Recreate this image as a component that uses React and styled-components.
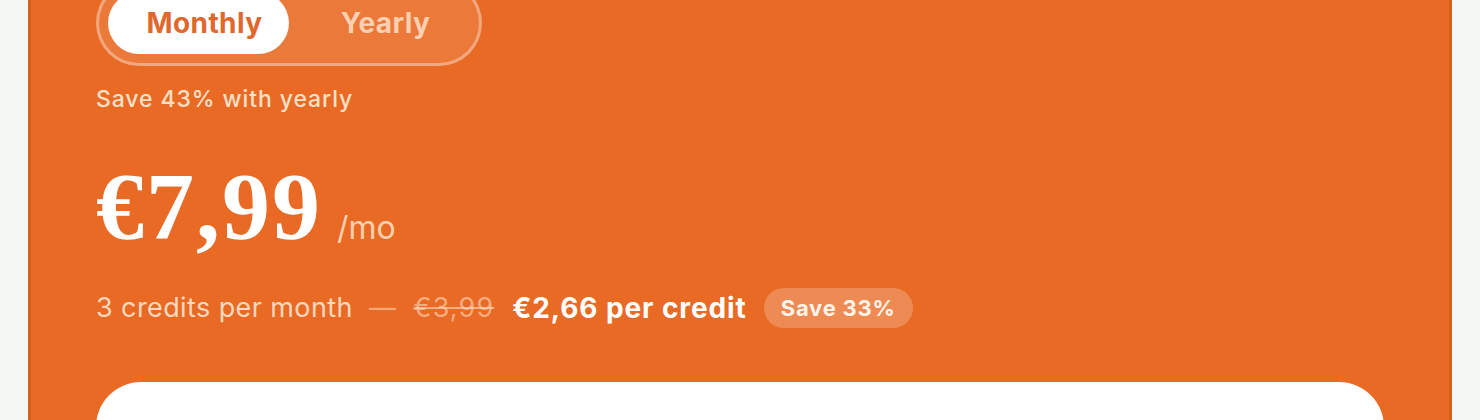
import React, { useState } from "react";
import styled, { createGlobalStyle } from "styled-components";

const GlobalStyle = createGlobalStyle`
  * { box-sizing: border-box; }
  body {
    margin: 0;
    background: #f4f8f5;
    font-family: Inter, "Noto Sans", sans-serif;
    overflow: hidden;
  }
`;

const Page = styled.div`
  width: 1480px;
  height: 420px;
  padding: 0 28px;
  overflow: hidden;
`;

// the card is scrolled: its top edge sits above the viewport
const Card = styled.section`
  margin-top: -63px;
  background: #e96a24;
  border: 3px solid #d65f1e;
  border-radius: 40px;
  padding: 40px 65px 60px;
  height: 560px;
`;

const Toggle = styled.div`
  display: inline-flex;
  align-items: center;
  padding: 9px;
  border: 3px solid rgba(255, 255, 255, 0.35);
  border-radius: 999px;
  background: rgba(255, 255, 255, 0.1);
`;

const ToggleOption = styled.button`
  border: none;
  cursor: pointer;
  width: 181px;
  height: 62px;
  padding: 0 0 0 12px;
  border-radius: 999px;
  font-family: Inter, sans-serif;
  font-size: 28px;
  font-weight: 700;
  letter-spacing: 0.4px;
  background: ${(p) => (p.$active ? "#ffffff" : "transparent")};
  color: ${(p) => (p.$active ? "#e0682c" : "rgba(255, 232, 212, 0.78)")};
`;

const SaveHint = styled.p`
  margin: 20px 0 0;
  font-size: 23px;
  font-weight: 500;
  letter-spacing: 0.9px;
  color: #fbe0c8;
  line-height: 26px;
`;

const PriceRow = styled.div`
  display: flex;
  align-items: baseline;
  margin-top: 50px;
  gap: 15px;
`;

const Price = styled.span`
  font-family: "Liberation Serif", "Times New Roman", serif;
  font-weight: 700;
  font-size: 96px;
  line-height: 90px;
  color: #ffffff;
  letter-spacing: 2px;
`;

const Period = styled.span`
  font-size: 32px;
  color: rgba(255, 228, 205, 0.85);
`;

const CreditsRow = styled.div`
  display: flex;
  align-items: center;
  margin-top: 36px;
  font-size: 27px;
  letter-spacing: 0.7px;
  line-height: 40px;
`;

const Muted = styled.span`
  color: rgba(255, 232, 215, 0.88);
  font-weight: 400;
  letter-spacing: 0.4px;
`;

const Dash = styled.span`
  color: rgba(255, 220, 195, 0.55);
  margin: 0 17px 0 16px;
`;

const OldPrice = styled.span`
  color: rgba(255, 220, 195, 0.6);
  text-decoration: line-through;
  letter-spacing: 1.1px;
  margin-right: 18px;
`;

const PerCredit = styled.span`
  color: #ffffff;
  font-size: 28px;
  font-weight: 700;
  letter-spacing: 0.9px;
  margin-right: 17px;
`;

const Badge = styled.span`
  display: inline-flex;
  align-items: center;
  height: 40px;
  padding: 0 17px;
  border-radius: 20px;
  background: rgba(255, 255, 255, 0.22);
  color: #fff4ea;
  font-size: 22px;
  font-weight: 700;
  letter-spacing: 0.8px;
`;

const CTA = styled.button`
  display: block;
  width: 100%;
  height: 90px;
  margin-top: 54px;
  border: none;
  border-radius: 46px;
  background: #ffffff;
`;

export default function App() {
  const [plan, setPlan] = useState("monthly");
  return (
    <>
      <GlobalStyle />
      <Page>
        <Card>
          <Toggle>
            <ToggleOption $active={plan === "monthly"} onClick={() => setPlan("monthly")}>
              Monthly
            </ToggleOption>
            <ToggleOption $active={plan === "yearly"} onClick={() => setPlan("yearly")}>
              Yearly
            </ToggleOption>
          </Toggle>
          <SaveHint>Save 43% with yearly</SaveHint>
          <PriceRow>
            <Price>€7,99</Price>
            <Period>/mo</Period>
          </PriceRow>
          <CreditsRow>
            <Muted>3 credits per month</Muted>
            <Dash>—</Dash>
            <OldPrice>€3,99</OldPrice>
            <PerCredit>€2,66 per credit</PerCredit>
            <Badge>Save 33%</Badge>
          </CreditsRow>
          <CTA />
        </Card>
      </Page>
    </>
  );
}
